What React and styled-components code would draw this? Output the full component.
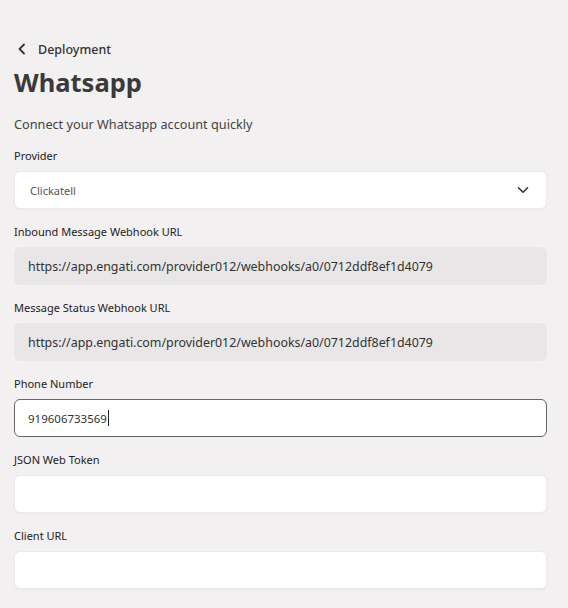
import React from "react";
import styled, { createGlobalStyle } from "styled-components";

const GlobalStyle = createGlobalStyle`
    html, body {
        margin: 0;
        padding: 0;
        background: #f2f0f0;
        font-family: "Noto Sans", "Open Sans", sans-serif;
        color: #333;
    }
`;

const Page = styled.div`
    width: 568px;
    min-height: 608px;
    box-sizing: border-box;
    padding: 40px 21px 16px 14px;
    background: #f2f0f0;
`;

const BackLink = styled.div`
    display: flex;
    align-items: center;
    gap: 12px;
    height: 18px;
    padding-left: 3px;
    font-size: 12.5px;
    font-weight: 500;
    color: #333;
`;

const Title = styled.h1`
    margin: 8px 0 0;
    font-size: 25.5px;
    line-height: 32px;
    font-weight: 700;
    color: #3a3a3a;
`;

const Subtitle = styled.p`
    margin: 17px 0 0;
    font-size: 12.7px;
    line-height: 18px;
    color: #444;
`;

const Form = styled.div`
    display: flex;
    flex-direction: column;
    gap: 16px;
    margin-top: 16px;
`;

const Field = styled.div`
    display: flex;
    flex-direction: column;
    gap: 8px;
`;

const Label = styled.label`
    font-size: 11px;
    line-height: 14px;
    font-weight: 400;
    color: #222;
`;

const Box = styled.div`
    height: 38px;
    box-sizing: border-box;
    display: flex;
    align-items: center;
    justify-content: ${(p) => (p.$select ? "space-between" : "flex-start")};
    padding: 0 17px 0 ${(p) => p.$indent || 13}px;
    border-radius: 6px;
    font-size: 12.4px;
    color: #333;
    background: ${(p) => (p.$readOnly ? "#e8e6e6" : "#fff")};
    border: 1px solid ${(p) => (p.$focused ? "#666" : p.$readOnly ? "#e8e6e6" : "#ebe9e9")};
    box-shadow: ${(p) => (p.$readOnly || p.$focused ? "none" : "0 1px 1px rgba(0,0,0,0.04)")};
`;

const SelectText = styled.span`
    font-size: 11px;
    color: #555;
`;

const PhoneText = styled.span`
    font-size: 11.5px;
    color: #333;
`;

const Caret = styled.span`
    display: inline-block;
    width: 1px;
    height: 16px;
    margin-left: 1px;
    background: #222;
`;

const ChevronLeft = () => (
    <svg width="9" height="12" viewBox="0 0 9 12" fill="none">
        <path d="M7 1.5L2.5 6L7 10.5" stroke="#333" strokeWidth="1.8" strokeLinecap="round" strokeLinejoin="round" />
    </svg>
);

const ChevronDown = () => (
    <svg width="12" height="8" viewBox="0 0 12 8" fill="none">
        <path d="M1.5 1.8L6 6.2L10.5 1.8" stroke="#333" strokeWidth="1.6" strokeLinecap="round" strokeLinejoin="round" />
    </svg>
);

const webhook = "https://app.engati.com/provider012/webhooks/a0/0712ddf8ef1d4079";

const App = () => {
    return (
        <>
            <GlobalStyle />
            <Page>
                <BackLink>
                    <ChevronLeft />
                    Deployment
                </BackLink>
                <Title>Whatsapp</Title>
                <Subtitle>Connect your Whatsapp account quickly</Subtitle>
                <Form>
                    <Field>
                        <Label>Provider</Label>
                        <Box $indent={15} $select>
                            <SelectText>Clickatell</SelectText>
                            <ChevronDown />
                        </Box>
                    </Field>
                    <Field>
                        <Label>Inbound Message Webhook URL</Label>
                        <Box $readOnly>{webhook}</Box>
                    </Field>
                    <Field>
                        <Label>Message Status Webhook URL</Label>
                        <Box $readOnly>{webhook}</Box>
                    </Field>
                    <Field>
                        <Label>Phone Number</Label>
                        <Box $focused>
                            <PhoneText>919606733569</PhoneText>
                            <Caret />
                        </Box>
                    </Field>
                    <Field>
                        <Label>JSON Web Token</Label>
                        <Box />
                    </Field>
                    <Field>
                        <Label>Client URL</Label>
                        <Box />
                    </Field>
                </Form>
            </Page>
        </>
    );
};

export default App;
